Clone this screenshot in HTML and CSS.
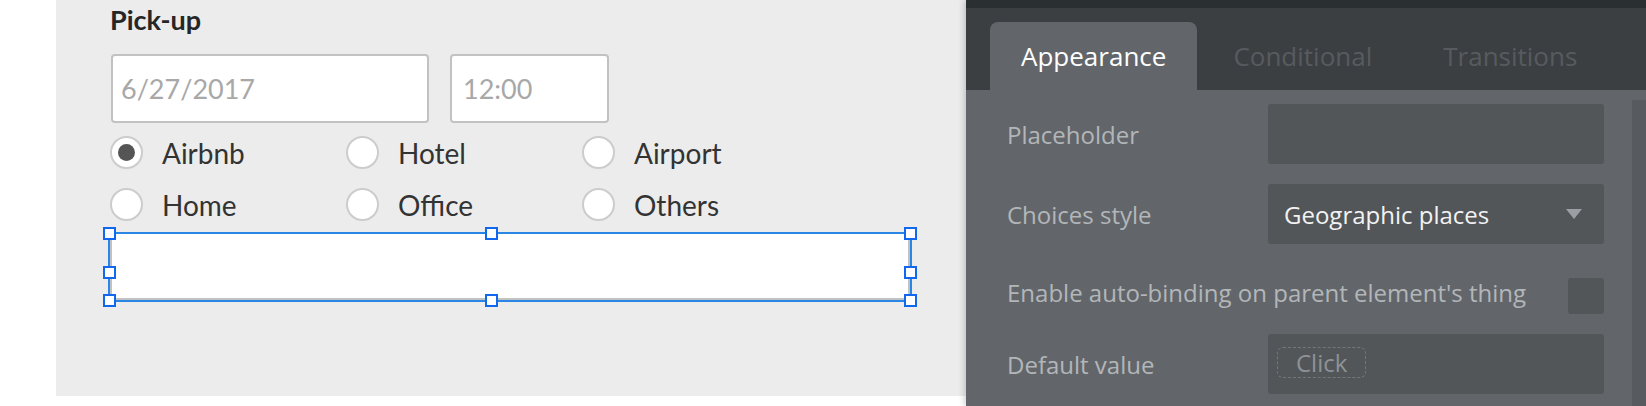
FILE: index.html
```html
<!DOCTYPE html>
<html>
<head>
<meta charset="utf-8">
<title>Pick-up editor</title>
<link rel="stylesheet" href="styles.css">
</head>
<body>
<div class="page">
  <div class="gutter"></div>
  <div class="canvas">
    <div class="form">
      <div class="title">Pick-up</div>
      <div class="inputs">
        <div class="field date">6/27/2017</div>
        <div class="field time">12:00</div>
      </div>
      <div class="radios">
        <div class="radio"><span class="dot checked"></span><span class="rlabel">Airbnb</span></div>
        <div class="radio"><span class="dot"></span><span class="rlabel">Hotel</span></div>
        <div class="radio"><span class="dot"></span><span class="rlabel">Airport</span></div>
        <div class="radio"><span class="dot"></span><span class="rlabel">Home</span></div>
        <div class="radio"><span class="dot"></span><span class="rlabel">Office</span></div>
        <div class="radio"><span class="dot"></span><span class="rlabel">Others</span></div>
      </div>
      <div class="selected">
        <div class="textbox"></div>
        <span class="handle h-tl"></span>
        <span class="handle h-tm"></span>
        <span class="handle h-tr"></span>
        <span class="handle h-ml"></span>
        <span class="handle h-mr"></span>
        <span class="handle h-bl"></span>
        <span class="handle h-bm"></span>
        <span class="handle h-br"></span>
      </div>
    </div>
  </div>
  <div class="panel">
    <div class="topbar"></div>
    <div class="tabs">
      <div class="tab active">Appearance</div>
      <div class="tab">Conditional</div>
      <div class="tab tab-last">Transitions</div>
    </div>
    <div class="body">
      <div class="props">
        <div class="label">Placeholder</div>
        <div class="box"></div>
        <div class="label">Choices style</div>
        <div class="box select"><span class="value">Geographic places</span><span class="caret"></span></div>
        <div class="row-check"><span class="label check-label">Enable auto-binding on parent element's thing</span><span class="check"></span></div>
        <div class="label">Default value</div>
        <div class="box default"><span class="click">Click</span></div>
      </div>
      <div class="scroll"></div>
    </div>
  </div>
</div>
</body>
</html>
```

FILE: styles.css
```css
html, body {
  margin: 0;
  padding: 0;
  background: #ffffff;
  overflow: hidden;
}

.page {
  display: flex;
  width: 1646px;
  height: 406px;
}

.gutter {
  width: 56px;
  flex: none;
}

.canvas {
  width: 910px;
  height: 396px;
  flex: none;
  background: #ececec;
}

.form {
  padding: 4px 0 0 55px;
  font-family: Lato, "Liberation Sans", sans-serif;
}

.title {
  font-weight: 700;
  font-size: 27px;
  line-height: 32px;
  color: #262626;
  margin-left: -1px;
}

.inputs {
  display: flex;
  gap: 21px;
  margin-top: 18px;
}

.field {
  box-sizing: border-box;
  height: 69px;
  border: 2px solid #c2c2c2;
  border-radius: 4px;
  background: #ffffff;
  padding-left: 8px;
  font-size: 27px;
  color: #a8a8a8;
  display: flex;
  align-items: center;
}

.date { width: 318px; }
.time { width: 159px; padding-left: 11px; }

.radios {
  display: grid;
  grid-template-columns: repeat(3, 236px);
  row-gap: 19px;
  margin-top: 13px;
  margin-left: -1px;
}

.radio {
  display: flex;
  align-items: center;
  height: 33px;
}

.dot {
  box-sizing: border-box;
  width: 33px;
  height: 33px;
  border-radius: 50%;
  border: 2px solid #cccccc;
  background: #ffffff;
  display: flex;
  align-items: center;
  justify-content: center;
  flex: none;
}

.dot.checked::after {
  content: "";
  width: 17px;
  height: 17px;
  border-radius: 50%;
  background: #555555;
}

.rlabel {
  margin-left: 19px;
  font-size: 28px;
  color: #333333;
}

.selected {
  position: relative;
  box-sizing: border-box;
  width: 804px;
  height: 70px;
  margin-top: 11px;
  margin-left: -3px;
  border: 2px solid #2a86e4;
}

.textbox {
  box-sizing: border-box;
  height: 100%;
  background: #ffffff;
  border: 2px solid #c2c2c2;
  border-top: none;
}

.handle {
  position: absolute;
  box-sizing: border-box;
  width: 13px;
  height: 13px;
  background: #ffffff;
  border: 2px solid #1167ee;
}

.h-tl { left: -7px; top: -7px; }
.h-tm { left: 375px; top: -7px; }
.h-tr { left: 794px; top: -7px; }
.h-ml { left: -7px; top: 32px; }
.h-mr { left: 794px; top: 32px; }
.h-bl { left: -7px; top: 60px; }
.h-bm { left: 375px; top: 60px; }
.h-br { left: 794px; top: 60px; }

/* Panel */
.panel {
  width: 680px;
  flex: none;
  height: 406px;
  display: flex;
  flex-direction: column;
  font-family: "Open Sans", "DejaVu Sans", sans-serif;
  box-shadow: -2px 0 6px rgba(0, 0, 0, 0.18);
  position: relative;
}

.topbar {
  height: 8px;
  background: #2a2f32;
}

.tabs {
  height: 68px;
  padding: 14px 0 0 24px;
  background: #3b3f42;
  display: flex;
  gap: 5px;
}

.tab {
  padding: 0 31px;
  line-height: 68px;
  font-size: 26px;
  color: #575b5f;
  border-radius: 8px 8px 0 0;
}

.tab-last {
  margin-left: 4px;
}

.tab.active {
  background: #62666a;
  color: #ffffff;
}

.body {
  flex: 1;
  display: flex;
  background: #62666a;
}

.props {
  flex: 1;
  padding: 14px 28px 0 41px;
  display: grid;
  grid-template-columns: 261px 336px;
  grid-auto-rows: min-content;
  row-gap: 20px;
  align-items: center;
}

.label {
  font-size: 24px;
  color: #b3b6b9;
  white-space: nowrap;
}

.box {
  height: 60px;
  border-radius: 3px;
  background: #525659;
  box-sizing: border-box;
}

.select {
  display: flex;
  align-items: center;
  padding: 0 22px 0 16px;
}

.value {
  font-size: 24px;
  color: #f2f2f2;
}

.caret {
  margin-left: auto;
  width: 0;
  height: 0;
  border-left: 8.5px solid transparent;
  border-right: 8.5px solid transparent;
  border-top: 10px solid #9b9fa3;
}

.row-check {
  grid-column: 1 / -1;
  display: flex;
  align-items: center;
  justify-content: space-between;
  padding-top: 12px;
  margin-bottom: -1px;
}

.check-label {
  margin-bottom: 6px;
}

.check {
  width: 36px;
  height: 36px;
  border-radius: 3px;
  background: #525659;
}

.default {
  padding: 13px 9px;
}

.click {
  display: inline-block;
  box-sizing: border-box;
  height: 31px;
  padding: 0 18px;
  border: 1px dashed #73777b;
  border-radius: 6px;
  font-size: 24px;
  line-height: 29px;
  color: #8e9296;
}

.scroll {
  width: 14px;
  margin-top: 10px;
  background: #575b5f;
}
```
